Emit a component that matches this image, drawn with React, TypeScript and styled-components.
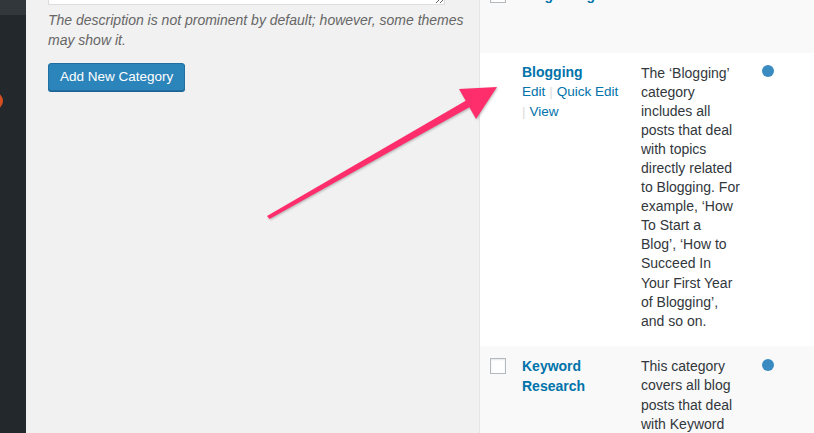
import React from 'react'
import styled, { createGlobalStyle } from 'styled-components'

const GlobalStyle = createGlobalStyle`
  html, body {
    margin: 0;
    padding: 0;
    background: #f1f1f1;
    font-family: 'Liberation Sans', Arial, sans-serif;
  }
`

const Page = styled.div`
  position: relative;
  display: flex;
  width: 814px;
  height: 433px;
  overflow: hidden;
`

const Sidebar = styled.div`
  width: 26px;
  flex-shrink: 0;
  display: flex;
  flex-direction: column;
  background: #23282d;
`

const SideTop = styled.div`
  height: 15px;
  background: #32373c;
`

const SideBadge = styled.div`
  width: 18px;
  height: 18px;
  margin: 77px 0 0 -15px;
  border-radius: 50%;
  background: #d54e21;
`

const Main = styled.div`
  flex: 1;
  display: grid;
  grid-template-columns: 453px 1fr;
`

const FormCol = styled.div`
  padding: 0 20px 0 22px;
  display: flex;
  flex-direction: column;
  align-items: flex-start;
`

const TextArea = styled.textarea`
  display: block;
  width: 397px;
  height: 60px;
  margin: -55px 0 0;
  box-sizing: border-box;
  border: 1px solid #ddd;
  background: #fff;
  box-shadow: inset 0 1px 2px rgba(0, 0, 0, 0.07);
  font: inherit;
`

const Hint = styled.p`
  margin: 5px 0 0;
  font-size: 14px;
  line-height: 20px;
  font-style: italic;
  color: #666;
  white-space: nowrap;

  span {
    display: block;
  }
`

const PrimaryButton = styled.button`
  margin-top: 13px;
  height: 28px;
  padding: 0 11px 1px;
  box-sizing: border-box;
  border: 1px solid #1f6fa3;
  border-radius: 3px;
  background: #2b84ba;
  box-shadow: 0 1px 0 #1c6391;
  color: #fff;
  font-family: 'Liberation Sans', Arial, sans-serif;
  font-size: 13.5px;
  line-height: 26px;
  white-space: nowrap;
`

const TableCol = styled.div`
  margin-top: -25px;
  border-left: 1px solid #e5e5e5;
  background: #fff;
`

const Row = styled.div<{ $alt?: boolean; $minH?: number }>`
  display: grid;
  grid-template-columns: 42px 119px 121px 1fr;
  align-items: start;
  background: ${(p) => (p.$alt ? '#f9f9f9' : '#fff')};
  padding: ${(p) => (p.$alt ? '10px 0 15px' : '9px 0 15px')};
  min-height: ${(p) => (p.$minH ? `${p.$minH}px` : 'auto')};
  box-sizing: border-box;
`

const CheckCell = styled.div`
  padding: 2px 0 0 10px;
`

const CheckBox = styled.div`
  width: 16px;
  height: 16px;
  box-sizing: border-box;
  border: 1px solid #b4b9be;
  background: #fff;
  box-shadow: inset 0 1px 2px rgba(0, 0, 0, 0.1);
`

const NameCell = styled.div`
  display: flex;
  flex-direction: column;
`

const Name = styled.a`
  color: #0073aa;
  font-weight: 700;
  font-size: 14px;
  line-height: 20px;
  text-decoration: none;
`

const Actions = styled.div`
  font-size: 13.5px;
  line-height: 19.5px;
  color: #0073aa;
  padding-right: 8px;
`

const Sep = styled.span<{ $lead?: boolean }>`
  color: #ddd;
  margin: ${(p) => (p.$lead ? '0 4px 0 0' : '0 4px')};
`

const Desc = styled.div`
  padding-top: 1.5px;
  font-size: 14px;
  line-height: 19.1px;
  color: #32373c;
  white-space: nowrap;

  span {
    display: block;
  }
`

const CountDot = styled.div`
  width: 12px;
  height: 12px;
  margin-top: 3px;
  border-radius: 50%;
  background: #3a8bc2;
`

const ArrowLayer = styled.svg`
  position: absolute;
  left: 0;
  top: 0;
  pointer-events: none;
  filter: drop-shadow(1px 1px 1px rgba(0, 0, 0, 0.25));
`

const blogging = [
  'The ‘Blogging’',
  'category',
  'includes all',
  'posts that deal',
  'with topics',
  'directly related',
  'to Blogging. For',
  'example, ‘How',
  'To Start a',
  'Blog’, ‘How to',
  'Succeed In',
  'Your First Year',
  'of Blogging’,',
  'and so on.',
]

const keyword = ['This category', 'covers all blog', 'posts that deal', 'with Keyword']

export default function App() {
  return (
    <>
      <GlobalStyle />
      <Page>
        <Sidebar>
          <SideTop />
          <SideBadge />
        </Sidebar>
        <Main>
          <FormCol>
            <TextArea readOnly />
            <Hint>
              <span>The description is not prominent by default; however, some themes</span>
              <span>may show it.</span>
            </Hint>
            <PrimaryButton>Add New Category</PrimaryButton>
          </FormCol>
          <TableCol>
            <Row $alt $minH={78}>
              <CheckCell>
                <CheckBox />
              </CheckCell>
              <NameCell>
                <Name>Blog Design</Name>
              </NameCell>
            </Row>
            <Row>
              <div />
              <NameCell>
                <Name>Blogging</Name>
                <Actions>
                  Edit<Sep>|</Sep>Quick Edit
                  <br />
                  <Sep $lead>|</Sep>View
                </Actions>
              </NameCell>
              <Desc>
                {blogging.map((l) => (
                  <span key={l}>{l}</span>
                ))}
              </Desc>
              <CountDot />
            </Row>
            <Row $alt>
              <CheckCell>
                <CheckBox />
              </CheckCell>
              <NameCell>
                <Name>Keyword</Name>
                <Name>Research</Name>
              </NameCell>
              <Desc>
                {keyword.map((l) => (
                  <span key={l}>{l}</span>
                ))}
              </Desc>
              <CountDot />
            </Row>
          </TableCol>
        </Main>
        <ArrowLayer width="814" height="433" viewBox="0 0 814 433">
          <polygon
            points="267,216 465.7,100.8 459,89 497,87 476,119 469.3,107.2 269.5,219"
            fill="#fe2e6c"
          />
        </ArrowLayer>
      </Page>
    </>
  )
}
